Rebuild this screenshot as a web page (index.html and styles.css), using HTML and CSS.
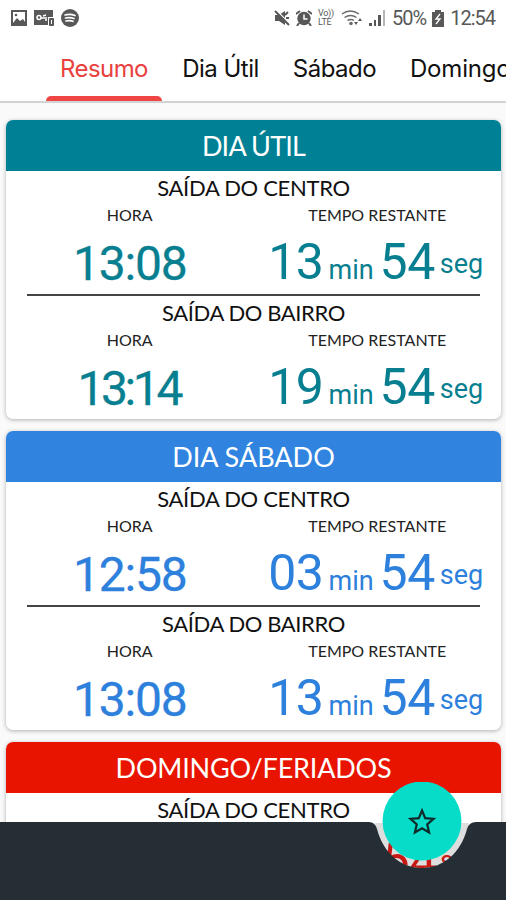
FILE: index.html
```html
<!DOCTYPE html>
<html lang="pt-BR">
<head>
    <meta charset="UTF-8">
    <meta name="viewport" content="width=device-width, initial-scale=1.0">
    <title>Horários</title>
    <link rel="stylesheet" href="styles.css">
</head>
<body>
    <div class="app">
        <div class="status-bar">
            <div class="status-left">
                <svg width="16" height="16" viewBox="0 0 16 16"><path fill="#585858" fill-rule="evenodd" d="M0 0h16v16H0zM2 2v11l4-5 3 3 3-2 2 3V2z"/><circle cx="5" cy="5" r="1.3" fill="#585858"/></svg>
                <svg width="20" height="16" viewBox="0 0 20 16"><path fill="#585858" d="M0 0h19v7h-5v8H0z"/><circle cx="5" cy="7.5" r="2" fill="none" stroke="#fff" stroke-width="1.5"/><path fill="none" stroke="#fff" stroke-width="1.5" d="M7 8h6M9 6l3-1M11 10h2"/><rect x="15" y="8" width="5" height="8" rx="1" fill="#585858"/><path stroke="#fff" d="M17.5 10v4"/></svg>
                <svg width="18" height="18" viewBox="0 0 18 18"><circle cx="9" cy="9" r="9" fill="#585858"/><path fill="none" stroke="#fff" stroke-width="1.7" stroke-linecap="round" d="M4 6q5-1.500 10 .5M4.500 9q4.500-1 8.500.5M5 12q4-1 7 .3"/></svg>
            </div>
            <div class="status-right">
                <svg class="mute" width="16" height="16" viewBox="0 0 16 16"><path fill="#585858" d="M1 5h4l6-4v14l-6-4H1z"/><path stroke="#fff" stroke-width="1.500" d="M2 0l14 14"/><path stroke="#585858" stroke-width="2" d="M1 1l14 14M11 5l3-3M12 8h3"/></svg>
                <svg class="alarm" width="16" height="16" viewBox="0 0 16 16"><circle cx="8" cy="8.500" r="6.700" fill="#585858"/><path stroke="#585858" stroke-width="2" d="M0 4l4-3M12 1l4 3M3 13l-2 3M13 13l2 3"/><path fill="none" stroke="#fff" stroke-width="1.500" d="M8 4.500V9h3.500"/></svg>
                <span class="volte"><span>Vo))</span><span>LTE</span></span>
                <svg class="wifi" width="22" height="16" viewBox="0 0 22 16"><path fill="none" stroke="#6a6a6a" stroke-width="1.500" d="M1 4q8-6 17 0M3.500 7.500q6-4 12 0M6.500 10.500q3.500-2 6.500 0"/><circle cx="10" cy="13.500" r="1.800" fill="#6a6a6a"/><path fill="#585858" d="M13 12h4l-2 3zM17 11l2-3 2 3z"/></svg>
                <svg class="signal" width="17" height="16" viewBox="0 0 17 16"><path fill="#585858" d="M0 13h3v3H0zM5 10h2v6H5zM9 5h3v11H9z"/><path fill="#b5b5b5" d="M14 0h2v16h-2z"/></svg>
                <span class="percent">50%</span>
                <svg class="battery" width="12" height="17" viewBox="0 0 12 17"><path fill="#585858" d="M3 0h6v2h3v15H0V2h3z"/><path fill="none" stroke="#fff" stroke-width="1.300" d="M8 4L4 9h4l-4 5"/></svg>
                <span class="clock">12:54</span>
            </div>
        </div>
        <nav class="tabs">
            <a class="tab active">Resumo</a>
            <a class="tab util">Dia Útil</a>
            <a class="tab sabado">Sábado</a>
            <a class="tab domingo">Domingo</a>
        </nav>

        <main class="content">
            <section class="card teal">
                <h2 class="h-util">DIA ÚTIL</h2>
                <div class="saida">
                    <h3>SAÍDA DO CENTRO</h3>
                    <div class="cols">
                        <span class="label">HORA</span>
                        <span class="label">TEMPO RESTANTE</span>
                        <span class="hora">13:08</span>
                        <span class="restante"><b>13</b><small>min</small><b>54</b><small class="seg">seg</small></span>
                    </div>
                </div>
                <div class="saida">
                    <h3 class="bairro">SAÍDA DO BAIRRO</h3>
                    <div class="cols">
                        <span class="label">HORA</span>
                        <span class="label">TEMPO RESTANTE</span>
                        <span class="hora narrow">13:14</span>
                        <span class="restante"><b>19</b><small>min</small><b>54</b><small class="seg">seg</small></span>
                    </div>
                </div>
            </section>

            <section class="card blue">
                <h2>DIA SÁBADO</h2>
                <div class="saida">
                    <h3>SAÍDA DO CENTRO</h3>
                    <div class="cols">
                        <span class="label">HORA</span>
                        <span class="label">TEMPO RESTANTE</span>
                        <span class="hora">12:58</span>
                        <span class="restante"><b>03</b><small>min</small><b>54</b><small class="seg">seg</small></span>
                    </div>
                </div>
                <div class="saida">
                    <h3 class="bairro">SAÍDA DO BAIRRO</h3>
                    <div class="cols">
                        <span class="label">HORA</span>
                        <span class="label">TEMPO RESTANTE</span>
                        <span class="hora">13:08</span>
                        <span class="restante"><b>13</b><small>min</small><b>54</b><small class="seg">seg</small></span>
                    </div>
                </div>
            </section>

            <section class="card red">
                <h2 class="h-domingo">DOMINGO/FERIADOS</h2>
                <div class="saida">
                    <h3>SAÍDA DO CENTRO</h3>
                </div>
            </section>
        </main>

        <div class="bottom-bar">
            <svg width="506" height="118" viewBox="0 0 506 118">
                <defs><clipPath id="notch"><circle cx="422" cy="39" r="47"/></clipPath></defs>
                <g clip-path="url(#notch)">
                    <path fill="#dedede" d="M370 41h104v50H370z"/>
                    <text class="under" x="382" y="95">54</text>
                    <text class="under-seg" x="440" y="88">seg</text>
                </g>
                <path fill="#242e34" d="M0 40h369Q375 40 377 47C383 70 400 86 422 86S461 70 467 47Q469 40 476 40H506V118H0z"/>
                <circle cx="422" cy="39" r="39.500" fill="#06dcc8"/>
                <path fill="none" stroke="#102a2a" stroke-width="2.200" d="M422 28.500l3.200 7.700 8.300.7-6.300 5.400 1.900 8.200-7.100-4.300-7.100 4.300 1.900-8.200-6.300-5.400 8.300-.7z"/>
            </svg>
        </div>
    </div>
</body>
</html>
```
FILE: styles.css
```css
* {
    box-sizing: border-box;
}
body {
    margin: 0;
    background: #fafafa;
    font-family: Lato, sans-serif;
    color: #111;
}
.app {
    position: relative;
    width: 506px;
    height: 900px;
    overflow: hidden;
}
.status-bar {
    display: flex;
    justify-content: space-between;
    height: 36px;
    padding: 0 11px;
    background: white;
    color: #585858;
    font-family: Roboto, sans-serif;
}
.status-left, .status-right {
    display: flex;
    align-items: center;
}
.status-left {
    gap: 7px;
}
.status-right {
    gap: 6px;
}
.volte {
    display: flex;
    flex-direction: column;
    width: 17px;
    font-size: 9px;
    line-height: 9px;
    letter-spacing: -0.3px;
}
.percent, .clock {
    font-size: 20px;
    letter-spacing: -1px;
}
.tabs {
    display: flex;
    height: 67px;
    padding-left: 46px;
    background: white;
    border-bottom: 2px solid #d3d3d3;
    overflow: hidden;
}
.tab {
    flex: none;
    font-family: Inter, sans-serif;
    font-size: 24px;
    line-height: 66px;
    letter-spacing: -0.5px;
    text-align: center;
    color: #111;
}
.tab.active {
    position: relative;
    width: 116px;
    height: 65px;
    letter-spacing: -0.6px;
    color: #e8413f;
}
.tab.active::after {
    content: "";
    position: absolute;
    left: 0;
    right: 0;
    bottom: 0;
    height: 5px;
    background: #f04545;
    border-radius: 5px 5px 0 0;
}
.tab.util {
    width: 117px;
}
.tab.sabado {
    width: 111px;
}
.tab.domingo {
    padding-left: 20px;
    letter-spacing: -0.2px;
}
.content {
    display: flex;
    flex-direction: column;
    gap: 12px;
    padding: 17px 5px 0 6px;
}
.card {
    height: 299px;
    background: white;
    border-radius: 7px;
    box-shadow: 0 1px 4px rgba(0,0,0,0.3);
    overflow: hidden;
}
h2, h3 {
    margin: 0;
    font-weight: normal;
    text-align: center;
}
h2 {
    height: 51px;
    font-size: 27px;
    line-height: 52px;
    color: white;
}
.h-util {
    letter-spacing: -0.8px;
}
.h-domingo {
    letter-spacing: -0.2px;
}
.teal h2 {
    background: #008094;
}
.blue h2 {
    background: #3084e0;
}
.red h2 {
    background: #e81400;
}
.teal {
    color: #087f90;
}
.blue {
    color: #2d80dc;
}
.saida {
    height: 125px;
    margin: 0 21px;
    border-bottom: 2px solid #444;
}
.saida:last-child {
    border-bottom: none;
}
h3 {
    height: 33px;
    font-size: 22px;
    line-height: 34px;
    letter-spacing: -0.3px;
    color: #111;
}
.bairro {
    letter-spacing: -0.4px;
}
.cols {
    display: grid;
    grid-template-columns: 1fr 1fr;
    grid-template-rows: 21px 68px;
    margin: 0 -21px;
    text-align: center;
}
.label {
    font-size: 16px;
    line-height: 22px;
    color: #222;
}
.hora {
    font-family: Roboto, sans-serif;
    font-size: 48px;
    line-height: 77px;
    letter-spacing: -1.2px;
    -webkit-text-stroke: 0.3px;
}
.hora.narrow {
    padding-right: 2px;
    letter-spacing: -3.4px;
}
.restante {
    display: flex;
    justify-content: center;
    align-items: baseline;
    gap: 5px;
    padding-right: 3px;
    font-family: Roboto, sans-serif;
    line-height: 75px;
}
.restante b {
    font-size: 50px;
    font-weight: normal;
    letter-spacing: -0.5px;
}
.restante small {
    margin-right: 1px;
    font-size: 27px;
}
.restante .seg {
    position: relative;
    top: -6px;
    margin-right: 0;
}
.bottom-bar {
    position: absolute;
    left: 0;
    bottom: 0;
    height: 118px;
}
.under {
    font: 49px Roboto, sans-serif;
    fill: #c81814;
}
.under-seg {
    font: 27px Roboto, sans-serif;
    fill: #c81814;
}
```
